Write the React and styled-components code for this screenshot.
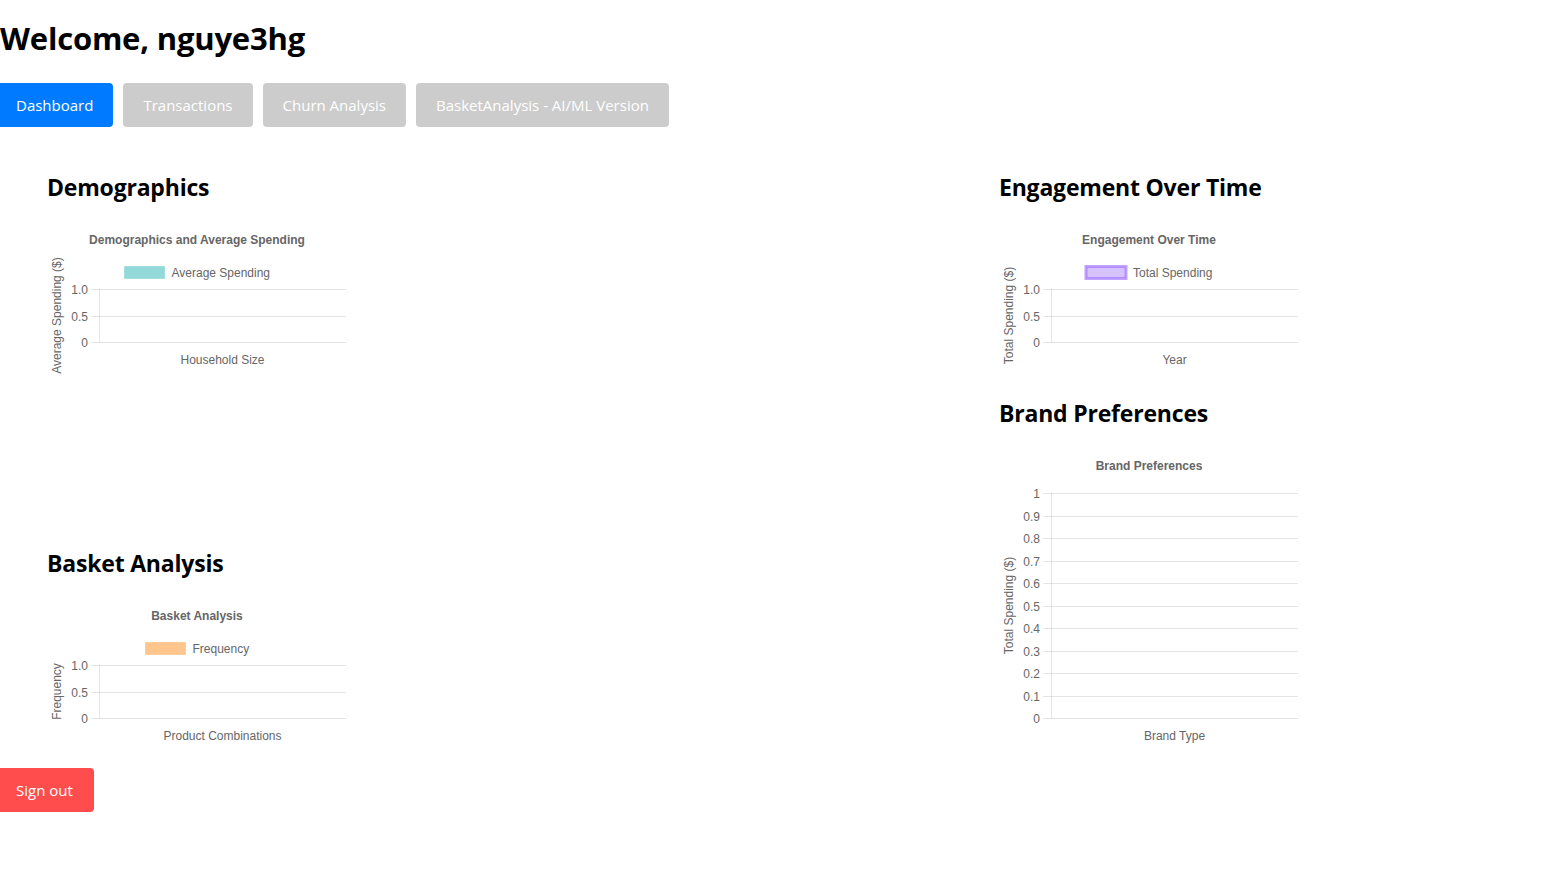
import React from 'react';
import styled, { createGlobalStyle } from 'styled-components';

const GlobalStyle = createGlobalStyle`
  body {
    margin: 0;
    background: #fff;
    font-family: 'Segoe UI', 'Open Sans', sans-serif;
    color: #000;
    overflow-x: hidden;
  }
`;

// the page sits a few px left of the viewport edge in the reference
const Page = styled.div`
  display: flex;
  flex-direction: column;
  margin-left: -4px;
`;

const Welcome = styled.h1`
  margin: 17px 0 24px;
  padding-left: 4px;
  font-size: 31px;
  line-height: 42px;
  font-weight: 700;
  letter-spacing: -0.2px;
`;

const Nav = styled.div`
  display: flex;
  gap: 10px;
`;

const TabButton = styled.button`
  height: 44px;
  padding: 0 20px;
  border: none;
  border-radius: 4px;
  font-family: inherit;
  font-size: 15px;
  color: #fff;
  background-color: ${(p) => (p.$active ? '#007bff' : '#cccccc')};
  cursor: pointer;
`;

const Board = styled.div`
  display: grid;
  grid-template-columns: 905px 1fr;
  column-gap: 47px;
  padding: 24px 51px 15px;
`;

const Column = styled.div`
  display: flex;
  flex-direction: column;
  justify-content: space-between;
`;

const Section = styled.section`
  display: flex;
  flex-direction: column;
  gap: 20px;
  padding-top: 20px;
`;

const SectionTitle = styled.h2`
  margin: 0;
  font-size: 23px;
  line-height: 32px;
  font-weight: 700;
  letter-spacing: -0.2px;
`;

const SignOut = styled.button`
  align-self: flex-start;
  height: 44px;
  padding: 0 21px 0 20px;
  border: none;
  border-radius: 4px;
  font-family: inherit;
  font-size: 15px;
  color: #fff;
  background-color: #ff4d4d;
  cursor: pointer;
`;

const tickFont = {
  fontFamily: "'Liberation Sans', Arial, sans-serif",
  fontSize: 12,
  fill: '#666',
};

// empty chart.js-like bar chart, drawn in svg
const EmptyChart = ({ title, legend, yLabel, xLabel, ticks, top, bottom }) => {
  const height = bottom + 35;
  const step = (bottom - top) / (ticks.length - 1);
  return (
    <svg width="300" height={height} viewBox={`0 0 300 ${height}`}>
      <text x="150" y="17" dy="0.35em" textAnchor="middle" {...tickFont} fontWeight="700">
        {title}
      </text>
      {legend && (
        <g>
          <rect
            x={legend.x}
            y="43.5"
            width="40"
            height="12"
            fill={legend.fill}
            stroke={legend.stroke}
            strokeWidth={legend.strokeWidth || 1}
          />
          <text x={legend.x + 47} y="49.5" dy="0.35em" {...tickFont}>
            {legend.label}
          </text>
        </g>
      )}
      <text
        x="10"
        y={(top + bottom) / 2}
        dy="0.35em"
        textAnchor="middle"
        transform={`rotate(-90 10 ${(top + bottom) / 2})`}
        {...tickFont}
      >
        {yLabel}
      </text>
      {ticks.map((t, i) => {
        const y = Math.round(top + i * step) + 0.5;
        return (
          <g key={t}>
            <line x1="44" x2="299" y1={y} y2={y} stroke="rgba(0,0,0,0.1)" />
            <text x="41" y={y} dy="0.35em" textAnchor="end" {...tickFont}>
              {t}
            </text>
          </g>
        );
      })}
      <line x1="52.5" x2="52.5" y1={top} y2={bottom + 0.5} stroke="rgba(0,0,0,0.1)" />
      <text x="175.5" y={bottom + 18} dy="0.35em" textAnchor="middle" {...tickFont}>
        {xLabel}
      </text>
    </svg>
  );
};

const shortTicks = ['1.0', '0.5', '0'];
const longTicks = ['1', '0.9', '0.8', '0.7', '0.6', '0.5', '0.4', '0.3', '0.2', '0.1', '0'];

export default function App() {
  return (
    <Page>
      <GlobalStyle />
      <Welcome>Welcome, nguye3hg</Welcome>
      <Nav>
        <TabButton $active>Dashboard</TabButton>
        <TabButton>Transactions</TabButton>
        <TabButton>Churn Analysis</TabButton>
        <TabButton>BasketAnalysis - AI/ML Version</TabButton>
      </Nav>
      <Board>
        <Column>
          <Section>
            <SectionTitle>Demographics</SectionTitle>
            <EmptyChart
              title="Demographics and Average Spending"
              legend={{ x: 77.5, label: 'Average Spending', fill: 'rgba(75,192,192,0.6)', stroke: 'rgba(75,192,192,0.3)' }}
              yLabel="Average Spending ($)"
              xLabel="Household Size"
              ticks={shortTicks}
              top={66}
              bottom={119}
            />
          </Section>
          <Section>
            <SectionTitle>Basket Analysis</SectionTitle>
            <EmptyChart
              title="Basket Analysis"
              legend={{ x: 98.5, label: 'Frequency', fill: 'rgba(255,159,64,0.6)', stroke: 'rgba(255,159,64,0.3)' }}
              yLabel="Frequency"
              xLabel="Product Combinations"
              ticks={shortTicks}
              top={66}
              bottom={119}
            />
          </Section>
        </Column>
        <Column>
          <Section>
            <SectionTitle>Engagement Over Time</SectionTitle>
            <EmptyChart
              title="Engagement Over Time"
              legend={{ x: 87, label: 'Total Spending', fill: 'rgba(153,102,255,0.4)', stroke: 'rgba(153,102,255,0.6)', strokeWidth: 3 }}
              yLabel="Total Spending ($)"
              xLabel="Year"
              ticks={shortTicks}
              top={66}
              bottom={119}
            />
          </Section>
          <Section>
            <SectionTitle>Brand Preferences</SectionTitle>
            <EmptyChart
              title="Brand Preferences"
              yLabel="Total Spending ($)"
              xLabel="Brand Type"
              ticks={longTicks}
              top={44}
              bottom={269}
            />
          </Section>
        </Column>
      </Board>
      <SignOut>Sign out</SignOut>
    </Page>
  );
}
